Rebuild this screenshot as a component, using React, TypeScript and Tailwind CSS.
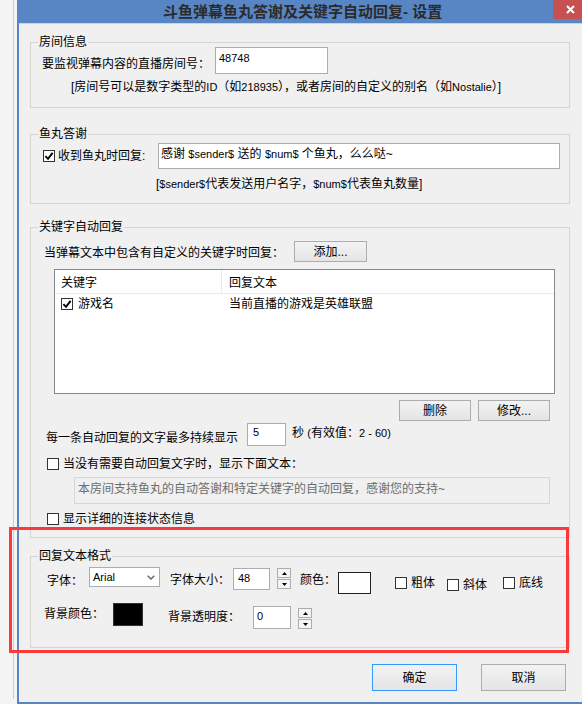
import type { ReactNode } from "react"

function L({ children }: { children: ReactNode }) {
  return <span className="text-[11px]">{children}</span>
}

function Check({ checked = false, className = "" }: { checked?: boolean; className?: string }) {
  return (
    <span
      className={`flex h-[12px] w-[12px] shrink-0 items-center justify-center border border-[#333333] bg-white ${className}`}
    >
      {checked && (
        <svg width="10" height="10" viewBox="0 0 10 10">
          <path d="M1.4 5.2 L4 7.8 L8.6 1.8" fill="none" stroke="#000" strokeWidth="1.9" />
        </svg>
      )}
    </span>
  )
}

function Group({ title, className = "", children }: { title: string; className?: string; children: ReactNode }) {
  return (
    <fieldset className={`ml-[11px] w-[540px] border border-[#d5d5d5] ${className}`}>
      <legend className="ml-[7px] px-[1px] leading-[14px]">{title}</legend>
      {children}
    </fieldset>
  )
}

function Btn({ children, primary = false, className = "" }: { children: ReactNode; primary?: boolean; className?: string }) {
  return (
    <div
      className={`flex items-center justify-center border bg-linear-to-b from-[#f3f3f3] to-[#e4e4e4] ${
        primary ? "border-[#3399ff]" : "border-[#acacac]"
      } ${className}`}
    >
      {children}
    </div>
  )
}

function Spin({ className = "" }: { className?: string }) {
  return (
    <div className={`flex w-[14px] flex-col gap-[1px] ${className}`}>
      <div className="flex h-[10px] items-center justify-center border border-[#acacac] bg-[#f5f5f5]">
        <svg width="5" height="3" viewBox="0 0 5 3">
          <path d="M0 3 L2.5 0 L5 3Z" fill="#000" />
        </svg>
      </div>
      <div className="flex h-[10px] items-center justify-center border border-[#acacac] bg-[#f5f5f5]">
        <svg width="5" height="3" viewBox="0 0 5 3">
          <path d="M0 0 L2.5 3 L5 0Z" fill="#000" />
        </svg>
      </div>
    </div>
  )
}

const box = "border border-[#abadb3] bg-white"

export default function App() {
  return (
    <div className="relative flex h-[704px] w-[582px] overflow-hidden bg-[#f4f4f4] text-[12px] leading-[14px] text-black font-['Liberation_Sans','Noto_Sans_CJK_SC',sans-serif]">
      {/* window behind */}
      <div className="h-[699px] w-[14px] shrink-0 border-r border-[#cdcdcd]" />
      <div className="w-[3px] shrink-0" />

      <div className="flex h-[704px] w-[570px] shrink-0 flex-col border-b-2 border-l-2 border-[#5886c4]">
        {/* title bar */}
        <div className="flex h-[23px] shrink-0 items-start bg-[#5886c4]">
          <span className="ml-[144px] mt-[3px] text-[15px] font-bold leading-[18px] text-[#2b2b2b]">
            斗鱼弹幕鱼丸答谢及关键字自动回复- 设置
          </span>
          <div className="ml-auto flex h-[19px] w-[34px] items-center justify-center bg-[#c75050]">
            <svg width="9" height="9" viewBox="0 0 9 9">
              <path d="M1 1 L8 8 M8 1 L1 8" stroke="#fff" strokeWidth="2" />
            </svg>
          </div>
        </div>

        <div className="flex-1 border-t border-[#c9d3df] bg-[#f0f0f0]">
          <Group title="房间信息" className="mt-[11px] pb-[13px]">
            <div className="-mt-[2px] flex items-center">
              <span className="ml-[11px] mt-[6px] w-[173px] shrink-0">要监视弹幕内容的直播房间号：</span>
              <div className={`h-[27px] w-[113px] pl-[3px] pt-[3px] text-[11px] ${box}`}>48748</div>
            </div>
            <div className="ml-[40px] mt-[6px]">
              [房间号可以是数字类型的<L>ID</L>（如<L>218935</L>），或者房间的自定义的别名（如<L>Nostalie</L>）]
            </div>
          </Group>

          <Group title="鱼丸答谢" className="mt-[19px] pb-[12px]">
            <div className="mt-[2px] flex items-start">
              <div className="ml-[12px] mt-[6px] flex w-[115px] shrink-0 items-center">
                <Check checked />
                <span className="ml-[3px]">收到鱼丸时回复:</span>
              </div>
              <div className={`h-[26px] w-[402px] pl-[2px] pt-[3px] ${box}`}>
                感谢 <L>$sender$</L> 送的 <L>$num$</L> 个鱼丸，么么哒~
              </div>
            </div>
            <div className="ml-[125px] mt-[8px]">
              [<L>$sender$</L>代表发送用户名字，<L>$num$</L>代表鱼丸数量]
            </div>
          </Group>

          <Group title="关键字自动回复" className="mt-[16px] pb-[11px]">
            <div className="mt-[7px] flex items-center">
              <span className="ml-[13px] mt-[2px] w-[250px] shrink-0">当弹幕文本中包含有自定义的关键字时回复：</span>
              <Btn className="h-[21px] w-[73px]">添加...</Btn>
            </div>

            <div className="ml-[23px] mt-[7px] h-[125px] w-[501px] border border-[#828790] bg-white">
              <div className="flex h-[24px] border-b border-[#e3ebf6]">
                <div className="w-[167px] border-r border-[#e3ebf6] pl-[6px] pt-[6px]">关键字</div>
                <div className="pl-[7px] pt-[6px]">回复文本</div>
              </div>
              <div className="mt-[1px] flex h-[18px] items-center">
                <div className="flex w-[167px] items-center pl-[6px]">
                  <Check checked />
                  <span className="ml-[5px]">游戏名</span>
                </div>
                <div className="pl-[7px]">当前直播的游戏是英雄联盟</div>
              </div>
            </div>

            <div className="mt-[6px] flex justify-end gap-[7px] pr-[19px]">
              <Btn className="h-[21px] w-[72px]">删除</Btn>
              <Btn className="h-[21px] w-[72px]">修改...</Btn>
            </div>

            <div className="mt-[2px] flex items-start">
              <span className="ml-[15px] mt-[8px] w-[201px] shrink-0">每一条自动回复的文字最多持续显示</span>
              <div className={`h-[23px] w-[39px] pl-[5px] pt-[1px] text-[11px] ${box}`}>5</div>
              <span className="ml-[6px] mt-[3px]">
                秒 <L>(</L>有效值：<L>2 - 60)</L>
              </span>
            </div>

            <div className="ml-[16px] mt-[11px] flex items-center">
              <Check />
              <span className="ml-[4px]">当没有需要自动回复文字时，显示下面文本：</span>
            </div>

            <div className="ml-[43px] mt-[6px] h-[27px] w-[476px] border border-[#d6d6d6] bg-[#f0f0f0] pl-[3px] pt-[4px] text-[#6d6d6d]">
              本房间支持鱼丸的自动答谢和特定关键字的自动回复，感谢您的支持~
            </div>

            <div className="ml-[16px] mt-[8px] flex items-center">
              <Check />
              <span className="ml-[4px]">显示详细的连接状态信息</span>
            </div>
          </Group>

          <Group title="回复文本格式" className="mt-[11px] pb-[18px]">
            <div className="mt-[4px] flex items-start">
              <span className="ml-[16px] mt-[7px] w-[42px] shrink-0">字体：</span>
              <div className={`flex h-[20px] w-[71px] items-start justify-between pl-[3px] pr-[4px] pt-[2px] text-[11px] ${box}`}>
                <span>Arial</span>
                <svg width="8" height="5" viewBox="0 0 8 5" className="mt-[5px]">
                  <path d="M0.7 0.7 L4 4 L7.3 0.7" fill="none" stroke="#6a6a6a" strokeWidth="1.5" />
                </svg>
              </div>
              <span className="ml-[10px] mt-[6px] w-[63px] shrink-0">字体大小：</span>
              <div className={`mt-[1px] h-[22px] w-[37px] pl-[4px] pt-[2px] text-[11px] ${box}`}>48</div>
              <Spin className="ml-[7px] mt-[1px]" />
              <span className="ml-[9px] mt-[6px] w-[38px] shrink-0">颜色：</span>
              <div className="mt-[5px] h-[22px] w-[33px] border border-[#222] bg-white" />
              <div className="ml-[24px] mt-[9px] flex w-[52px] items-center">
                <Check />
                <span className="ml-[4px]">粗体</span>
              </div>
              <div className="mt-[11px] flex w-[56px] items-center">
                <Check />
                <span className="ml-[4px]">斜体</span>
              </div>
              <div className="mt-[9px] flex items-center">
                <Check />
                <span className="ml-[4px]">底线</span>
              </div>
            </div>

            <div className="mt-[9px] flex items-start">
              <span className="ml-[13px] mt-[4px] w-[69px] shrink-0">背景颜色：</span>
              <div className="h-[23px] w-[30px] border border-[#333] bg-black" />
              <span className="ml-[25px] mt-[7px] w-[85px] shrink-0">背景透明度：</span>
              <div className={`mt-[3px] h-[23px] w-[38px] pl-[3px] pt-[2px] text-[11px] ${box}`}>0</div>
              <Spin className="ml-[7px] mt-[5px]" />
            </div>
          </Group>

          <div className="ml-[353px] mt-[16px] flex gap-[24px]">
            <Btn primary className="h-[27px] w-[85px]">
              确定
            </Btn>
            <Btn className="h-[27px] w-[85px]">取消</Btn>
          </div>
        </div>
      </div>

      {/* red annotation frame */}
      <div className="absolute left-[9px] top-[527px] h-[126px] w-[560px] border-[3px] border-[#f93a3a]" />
    </div>
  )
}
